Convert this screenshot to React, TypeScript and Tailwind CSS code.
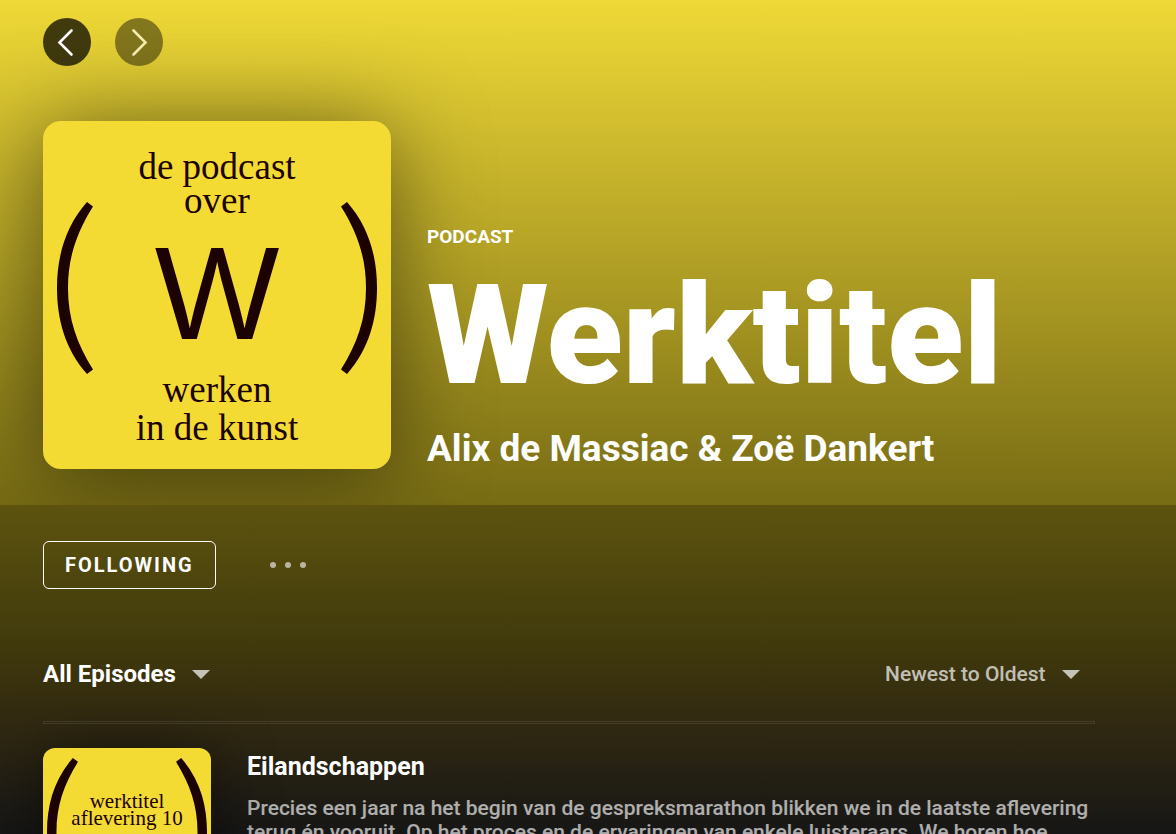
import React from 'react';

const episodes = [
  {
    title: 'Eilandschappen',
    cover: ['werktitel', 'aflevering 10'],
    description:
      'Precies een jaar na het begin van de gespreksmarathon blikken we in de laatste aflevering terug én vooruit. Op het proces en de ervaringen van enkele luisteraars. We horen hoe',
  },
];

const Bracket = ({ className }: { className: string }) => (
  <svg viewBox="0 0 36 172" className={className} fill="currentColor" aria-hidden="true">
    <path d="M30 0C8 25 0 55 0 86s8 61 30 86l6-4.500C20 142 11 117 11 86s9-56 25-81.500z" />
  </svg>
);

const Caret = () => (
  <svg viewBox="0 0 18 9" className="pointer-events-none h-[9px] w-[18px]" fill="currentColor" aria-hidden="true">
    <path d="M0 0h18L9 9z" />
  </svg>
);

const NavButton = ({ label, path, disabled }: { label: string; path: string; disabled?: boolean }) => (
  <button
    aria-label={label}
    disabled={disabled}
    className="h-12 w-12 rounded-full bg-black/72 text-white disabled:opacity-60"
  >
    <svg viewBox="0 0 48 48" fill="none" stroke="currentColor" strokeWidth="2.6" strokeLinecap="round" aria-hidden="true">
      <path d={path} />
    </svg>
  </button>
);

const PodcastCover = () => (
  <div className="flex h-[348px] w-[348px] shrink-0 items-start justify-between rounded-[18px] bg-[#f4db34] px-[14px] text-[#1c0202] shadow-[0_6px_90px_rgba(0,0,0,0.5)]">
    <Bracket className="mt-[81px] h-[172px] w-9" />
    <div className="pt-[29px] text-center font-['Liberation_Serif',serif] text-[37px] leading-[34px]">
      <p>de podcast</p>
      <p>over</p>
      <p className="mt-[10px] font-['Liberation_Sans',sans-serif] text-[132px] leading-[132px]">W</p>
      <p className="mt-[11px] leading-[38px]">werken</p>
      <p className="leading-[38px]">in de kunst</p>
    </div>
    <Bracket className="mt-[81px] h-[172px] w-9 -scale-x-100" />
  </div>
);

const EpisodeCover = ({ lines }: { lines: string[] }) => (
  <div className="relative h-[168px] w-[168px] shrink-0 rounded-xl bg-[#f4db34] px-1 text-[#1c0202] shadow-[0_6px_60px_rgba(0,0,0,0.5)]">
    <div className="flex h-full items-center justify-between">
      <Bracket className="h-[148px] w-[31px]" />
      <Bracket className="h-[148px] w-[31px] -scale-x-100" />
    </div>
    <div className="absolute inset-x-0 top-[45px] text-center font-['Liberation_Serif',serif] text-[21px] leading-[17px]">
      {lines.map((line) => (
        <p key={line}>{line}</p>
      ))}
    </div>
  </div>
);

export default function App() {
  return (
    <div className="flex h-screen flex-col overflow-hidden bg-[#161616] font-['Roboto',sans-serif] text-white">
      <header className="shrink-0 bg-linear-to-b/srgb from-[#efd937] to-[#776b14] pt-[18px] pr-20 pb-9 pl-[43px]">
        <nav className="flex gap-6">
          <NavButton label="Back" path="M28.500 12.500l-12 12 12 12" />
          <NavButton label="Forward" path="M18.500 12.500l12 12-12 12" disabled />
        </nav>
        <div className="mt-[55px] flex items-end gap-9">
          <PodcastCover />
          <div>
            <p className="text-[19px] leading-6 font-bold">PODCAST</p>
            <h1 className="mt-4 text-[140px] leading-[140px] font-black">Werktitel</h1>
            <p className="mt-6 text-[37px] leading-10 font-bold">Alix de Massiac &amp; Zoë Dankert</p>
          </div>
        </div>
      </header>

      <main className="relative min-h-0 flex-1 overflow-hidden bg-[linear-gradient(#5d530f_0%,#40390c_43%,#312911_66%,#161616_100%)] pt-9 pr-[81px] pl-[43px]">
        <div className="flex items-center gap-12">
          <button className="h-12 rounded-md border border-white px-[21px] text-[20px] font-bold tracking-widest">
            FOLLOWING
          </button>
          <button aria-label="More options" className="flex h-12 items-center gap-[9px] px-1.5 text-white/60">
            <span className="h-1.5 w-1.5 rounded-full bg-current" />
            <span className="h-1.5 w-1.5 rounded-full bg-current" />
            <span className="h-1.5 w-1.5 rounded-full bg-current" />
          </button>
        </div>

        <div className="mt-[69px] flex items-center justify-between pr-[15px]">
          <div className="flex items-center gap-4">
            <select aria-label="Filter episodes" className="appearance-none text-2xl leading-8 font-bold">
              <option>All Episodes</option>
            </select>
            <span className="text-white/70">
              <Caret />
            </span>
          </div>
          <div className="flex items-center gap-4 text-white/70">
            <select aria-label="Sort episodes" className="appearance-none text-[21px] leading-8 font-medium">
              <option>Newest to Oldest</option>
            </select>
            <Caret />
          </div>
        </div>
        <div className="mt-[31px] h-[3px] border border-white/10" />

        {episodes.map((episode) => (
          <article key={episode.title} className="mt-6 flex gap-9">
            <EpisodeCover lines={episode.cover} />
            <div className="min-w-0 flex-1">
              <h2 className="mt-[3px] text-[25px] leading-8 font-bold">{episode.title}</h2>
              <p className="mt-[13px] text-[21px] leading-6 font-medium text-white/65">{episode.description}</p>
            </div>
          </article>
        ))}
      </main>
    </div>
  );
}
